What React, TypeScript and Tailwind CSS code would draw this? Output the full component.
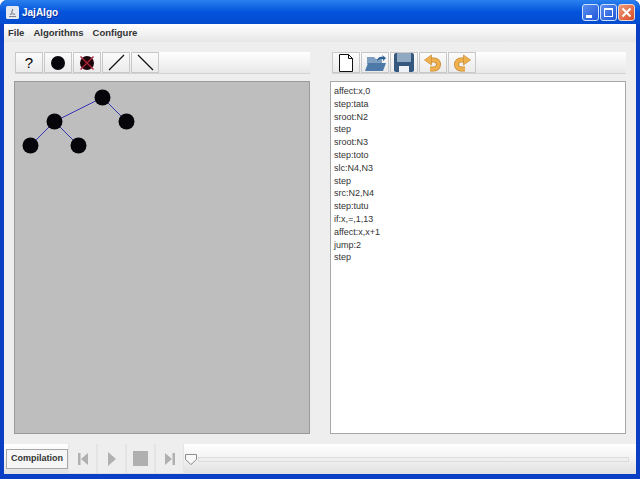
const lines = [
  "affect:x,0",
  "step:tata",
  "sroot:N2",
  "step",
  "sroot:N3",
  "step:toto",
  "slc:N4,N3",
  "step",
  "src:N2,N4",
  "step:tutu",
  "if:x,=,1,13",
  "affect:x,x+1",
  "jump:2",
  "step",
];

const nodes = [
  [87.5, 15.5],
  [39.5, 39.5],
  [111.5, 39.5],
  [15.5, 63.5],
  [63.5, 63.5],
];

const edges = [
  [0, 1],
  [0, 2],
  [1, 3],
  [1, 4],
];

function ToolButton({ children }: { children: React.ReactNode }) {
  return (
    <div className="w-[28px] h-[21px] border border-[#c8c8c8] bg-gradient-to-b from-[#fbfbfb] to-[#ebebeb] flex items-center justify-center">
      {children}
    </div>
  );
}

function PlayerButton({ children }: { children: React.ReactNode }) {
  return (
    <div className="w-[29px] h-[29px] border-x border-[#e4e4e4] bg-[#eeeeee] flex items-center justify-center -mt-px">
      {children}
    </div>
  );
}

function Toolbar({ children }: { children: React.ReactNode }) {
  return (
    <div className="h-[22px] flex gap-px border-b border-[#d4d4d4] bg-gradient-to-b from-white to-[#e8e8e8]">
      {children}
    </div>
  );
}

function Graph() {
  return (
    <svg width="294" height="100" className="block">
      {edges.map(([a, b], i) => (
        <line key={i} x1={nodes[a][0]} y1={nodes[a][1]} x2={nodes[b][0]} y2={nodes[b][1]} stroke="#3535b5" strokeWidth="1" />
      ))}
      {nodes.map(([x, y], i) => (
        <circle key={i} cx={x} cy={y} r="8" fill="#05050a" />
      ))}
    </svg>
  );
}

export default function App() {
  return (
    <div className="w-[640px] h-[479px] overflow-hidden flex flex-col bg-[#0a3ec4] rounded-t-[7px] font-['Liberation_Sans',Arial,sans-serif]">
      {/* title bar */}
      <div className="h-[24px] shrink-0 flex items-center pl-[6px] pr-[5px] rounded-t-[7px] bg-gradient-to-b from-[#2a80ee] via-[#0553dc] to-[#044ccf]">
        <svg width="13" height="13" viewBox="0 0 13 13" className="shrink-0">
          <rect width="13" height="13" rx="1.5" fill="#e4e8f0" />
          <path d="M3 10.5h7M4 8.5c1-1 4-1 5 0M6 7c-1-1 1-2 .5-4" stroke="#7d7f8c" strokeWidth="1.2" fill="none" />
        </svg>
        <span className="ml-[3px] text-[10px] font-bold text-white [text-shadow:1px_1px_0_#0a2f9c]">JajAlgo</span>
        <div className="ml-auto flex gap-px">
          <div className="w-[17px] h-[17px] rounded-[3px] border border-[#cfe0fa] bg-gradient-to-br from-[#5b8df0] to-[#1f56d8] relative">
            <div className="absolute left-[3px] bottom-[2px] w-[6px] h-[3px] bg-white" />
          </div>
          <div className="w-[17px] h-[17px] rounded-[3px] border border-[#cfe0fa] bg-gradient-to-br from-[#5b8df0] to-[#1f56d8] p-[3px]">
            <div className="w-full h-full border border-white border-t-2" />
          </div>
          <div className="w-[17px] h-[17px] rounded-[3px] border border-[#f0d8d0] bg-gradient-to-br from-[#ee9a78] to-[#d8481f] flex items-center justify-center">
            <svg width="11" height="11" viewBox="0 0 11 11">
              <path d="M1.5 1.5l8 8M9.500 1.500l-8 8" stroke="#fff" strokeWidth="2" />
            </svg>
          </div>
        </div>
      </div>

      {/* client area */}
      <div className="flex-1 min-h-0 mx-[4px] mb-[5px] flex flex-col bg-[#eeeeee]">
        <div className="h-[18px] shrink-0 flex items-center gap-[9px] pl-[4px] text-[9.5px] font-bold text-[#333333] bg-gradient-to-b from-white to-[#e6e6e6]">
          <span>File</span>
          <span>Algorithms</span>
          <span>Configure</span>
        </div>

        <div className="flex-1 min-h-0 flex gap-[20px] pl-[10px] pr-[10px] pt-[10px]">
          {/* left side */}
          <div className="w-[296px] flex flex-col">
            <div className="pl-px">
              <Toolbar>
                <ToolButton>
                  <span className="text-[15px] leading-none text-black">?</span>
                </ToolButton>
                <ToolButton>
                  <div className="w-[14px] h-[14px] rounded-full bg-[#05050a]" />
                </ToolButton>
                <ToolButton>
                  <svg width="16" height="16" viewBox="0 0 16 16">
                    <circle cx="8" cy="8" r="7" fill="#1a0608" />
                    <path d="M1.5 1.5l13 13M14.5 1.5l-13 13" stroke="#b0223a" strokeWidth="1.4" />
                  </svg>
                </ToolButton>
                <ToolButton>
                  <svg width="17" height="17" viewBox="0 0 17 17">
                    <line x1="1" y1="16" x2="16" y2="1" stroke="#111" strokeWidth="1.2" />
                  </svg>
                </ToolButton>
                <ToolButton>
                  <svg width="17" height="17" viewBox="0 0 17 17">
                    <line x1="1" y1="1" x2="16" y2="16" stroke="#111" strokeWidth="1.2" />
                  </svg>
                </ToolButton>
              </Toolbar>
            </div>
            <div className="mt-[7px] h-[353px] border border-[#9a9a9a] bg-[#bebebe]">
              <Graph />
            </div>
          </div>

          {/* right side */}
          <div className="w-[296px] flex flex-col">
            <div className="pl-[2px]">
              <Toolbar>
                <ToolButton>
                  <svg width="16" height="18" viewBox="0 0 16 18">
                    <path d="M1.5.5h9l4 4v13h-13zM10.5.5v4h4" fill="#fff" stroke="#111" />
                  </svg>
                </ToolButton>
                <ToolButton>
                  <svg width="23" height="19" viewBox="0 0 23 19">
                    <path d="M3 4h7l2 2h6v5H3z" fill="#7f9fc0" />
                    <path d="M1 18l3-8h18l-3 8z" fill="#4d7aa8" />
                    <path d="M13 8c0-3 3-5 6-4l-1-2 4 3-3 3V6c-2 0-4 0-6 2z" fill="#2c5f93" />
                  </svg>
                </ToolButton>
                <ToolButton>
                  <svg width="20" height="19" viewBox="0 0 20 19">
                    <rect width="20" height="19" rx="2" fill="#34587e" />
                    <rect x="3" y="0" width="14" height="9" fill="#8fa9c2" />
                    <rect x="5" y="13" width="10" height="6" fill="#eef2f6" />
                  </svg>
                </ToolButton>
                <ToolButton>
                  <svg width="20" height="18" viewBox="0 0 20 18">
                    <path d="M7 6h4a4.500 4.500 0 0 1 0 9H7" fill="none" stroke="#c98a34" strokeWidth="5" />
                    <path d="M7 6h4a4.500 4.500 0 0 1 0 9H7" fill="none" stroke="#efb04e" strokeWidth="3.400" />
                    <path d="M1.500 6l7-5v10z" fill="#efb04e" stroke="#c98a34" strokeWidth=".7" />
                  </svg>
                </ToolButton>
                <ToolButton>
                  <svg width="20" height="18" viewBox="0 0 20 18">
                    <path d="M13 6H9a4.500 4.500 0 0 0 0 9h4" fill="none" stroke="#c98a34" strokeWidth="5" />
                    <path d="M13 6H9a4.500 4.500 0 0 0 0 9h4" fill="none" stroke="#efb04e" strokeWidth="3.400" />
                    <path d="M18.500 6l-7-5v10z" fill="#efb04e" stroke="#c98a34" strokeWidth=".7" />
                  </svg>
                </ToolButton>
              </Toolbar>
            </div>
            <div className="mt-[7px] h-[353px] border border-[#a8a8a8] bg-white pl-[3px] pt-[3px] text-[9px] leading-[12.8px] text-[#333333]">
              {lines.map((line, i) => (
                <div key={i}>{line}</div>
              ))}
            </div>
          </div>
        </div>

        {/* player bar */}
        <div className="h-[30px] shrink-0 flex items-center bg-gradient-to-b from-white via-[#f2f2f2] to-[#e0e0e0]">
          <div className="ml-[2px] w-[62px] h-[20px] border border-[#a8a8a8] bg-[#f6f6f6] flex items-center justify-center text-[9px] font-bold text-[#333333]">
            Compilation
          </div>
          <div className="flex">
            <PlayerButton>
              <svg width="12" height="14" viewBox="0 0 12 14">
                <path d="M1 1h2.500v12H1zM11 1v12L4 7z" fill="#b0b0b0" />
              </svg>
            </PlayerButton>
            <PlayerButton>
              <svg width="10" height="14" viewBox="0 0 10 14">
                <path d="M1 0v14l8-7z" fill="#b0b0b0" />
              </svg>
            </PlayerButton>
            <PlayerButton>
              <div className="w-[15px] h-[15px] bg-[#b0b0b0]" />
            </PlayerButton>
            <PlayerButton>
              <svg width="12" height="14" viewBox="0 0 12 14">
                <path d="M1 1v12l7-6zM8.500 1H11v12H8.500z" fill="#b0b0b0" />
              </svg>
            </PlayerButton>
          </div>
          <div className="flex-1 flex items-center mr-[7px]">
            <svg width="14" height="13" viewBox="0 0 14 13" className="shrink-0">
              <path d="M1.500 1.500h11v5l-5.500 5-5.500-5z" fill="#f8f8f8" stroke="#8c8c8c" />
            </svg>
            <div className="flex-1 h-[5px] border border-[#dcdcdc] bg-[#efefef]" />
          </div>
        </div>
      </div>
    </div>
  );
}
